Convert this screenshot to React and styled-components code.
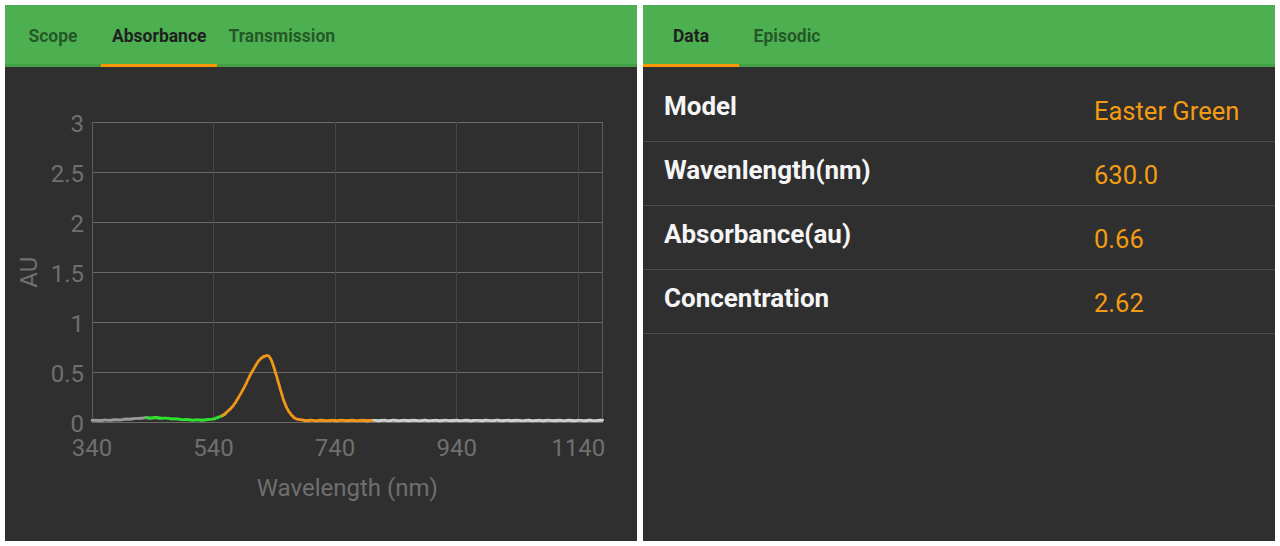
import styled, {createGlobalStyle} from "styled-components";

const GlobalStyle = createGlobalStyle`
  html, body {
    margin: 0;
    padding: 0;
    background: #ffffff;
  }
  body {
    font-family: Roboto, "Liberation Sans", sans-serif;
  }
`;

const Page = styled.div`
  display: flex;
  gap: 6px;
  padding: 5px;
  height: 546px;
  box-sizing: border-box;
`;

const Panel = styled.section`
  flex: 1;
  display: flex;
  flex-direction: column;
  background: #2f2f2f;
  min-width: 0;
`;

const TabBar = styled.nav`
  display: flex;
  height: 62px;
  background: #4caf50;
  box-shadow: inset 0 -3px 0 #43a047;
  flex-shrink: 0;
`;

const Tab = styled.div`
  min-width: 96px;
  padding: 0 11px 1px;
  box-sizing: border-box;
  display: flex;
  align-items: center;
  justify-content: center;
  font-size: 17.5px;
  font-weight: 700;
  color: ${p => (p.$active ? "#1f1f1f" : "rgba(0, 0, 0, 0.52)")};
  box-shadow: ${p => (p.$active ? "inset 0 -3px 0 #ff9800" : "none")};
  cursor: pointer;
`;

const ChartBody = styled.div`
  flex: 1;
`;

const ChartSvg = styled.svg`
  display: block;
  font-family: Roboto, "Liberation Sans", sans-serif;
`;

const DataList = styled.div`
  padding-top: 11px;
`;

const Row = styled.div`
  display: grid;
  grid-template-columns: 430px 1fr;
  align-items: start;
  height: 63px;
  padding-left: 21px;
  border-bottom: 1px solid #4a4a4a;
`;

const Label = styled.div`
  padding-top: 13px;
  font-size: 26px;
  line-height: 30px;
  font-weight: 700;
  color: #f5f5f5;
`;

const Value = styled.div`
  padding-top: 19px;
  font-size: 25.5px;
  line-height: 28px;
  color: #f39c12;
`;

// plot geometry, in svg units
const X0 = 87;
const X1 = 597.5;
const Y0 = 355.3;
const NM0 = 340;
const NM1 = 1180;
const sx = nm => X0 + ((nm - NM0) * (X1 - X0)) / (NM1 - NM0);
const sy = a => Y0 - a * 100;

const absorbance = nm => {
    const s = nm < 628 ? 32.5 : 18;
    let a = 0.65 * Math.exp(-((nm - 628) ** 2) / (2 * s * s));
    a += 0.027 * Math.exp(-((nm - 440) ** 2) / (2 * 35 * 35));
    a += 0.018 + 0.003 * Math.sin(nm * 1.7) + 0.002 * Math.sin(nm * 0.37);
    return a;
};

const trace = (from, to) => {
    const pts = [];
    for (let nm = from; nm <= to; nm += 2) {
        pts.push(`${sx(nm).toFixed(1)},${sy(absorbance(nm)).toFixed(1)}`);
    }
    return pts.join(" ");
};

const segments = [
    {from: 340, to: 450, color: "#9a9a9a"},
    {from: 790, to: 1180, color: "#cfcfcf"},
    {from: 430, to: 560, color: "#2fe02f"},
    {from: 554, to: 800, color: "#f0961a"},
];

const yTicks = [0, 0.5, 1, 1.5, 2, 2.5, 3];
const xTicks = [340, 540, 740, 940, 1140];

const AbsorbanceChart = () => (
    <ChartSvg width="632" height="475" viewBox="0 0 632 475">
        {yTicks.map(t => (
            <line key={t} x1={X0} x2={X1} y1={sy(t)} y2={sy(t)}
                  stroke="#6e6a63" strokeWidth="1" shapeRendering="crispEdges"/>
        ))}
        {xTicks.slice(1).map(t => (
            <line key={t} x1={sx(t)} x2={sx(t)} y1={sy(3)} y2={Y0}
                  stroke="#474747" strokeWidth="1" shapeRendering="crispEdges"/>
        ))}
        <line x1={X0} x2={X0} y1={sy(3)} y2={Y0} stroke="#5c5c5c" shapeRendering="crispEdges"/>
        <line x1={X1} x2={X1} y1={sy(3)} y2={Y0} stroke="#5c5c5c" shapeRendering="crispEdges"/>

        {segments.map(s => (
            <polyline key={s.from} points={trace(s.from, s.to)} fill="none"
                      stroke={s.color} strokeWidth="2.8" strokeLinejoin="round" strokeLinecap="round"/>
        ))}

        <g fill="#6f6f6f" fontSize="24">
            {yTicks.map(t => (
                <text key={t} x="79" y={sy(t) + 2} textAnchor="end" dominantBaseline="central">{t}</text>
            ))}
            {xTicks.map(t => (
                <text key={t} x={sx(t)} y="381" textAnchor="middle" dominantBaseline="central">{t}</text>
            ))}
            <text x={(X0 + X1) / 2} y="421" textAnchor="middle" dominantBaseline="central">Wavelength (nm)</text>
            <text x="24" y={(sy(3) + Y0) / 2} textAnchor="middle" dominantBaseline="central"
                  transform={`rotate(-90 24 ${(sy(3) + Y0) / 2})`}>AU</text>
        </g>
    </ChartSvg>
);

const readings = [
    {label: "Model", value: "Easter Green"},
    {label: "Wavenlength(nm)", value: "630.0"},
    {label: "Absorbance(au)", value: "0.66"},
    {label: "Concentration", value: "2.62"},
];

const App = () => (
    <>
        <GlobalStyle/>
        <Page>
            <Panel>
                <TabBar>
                    <Tab>Scope</Tab>
                    <Tab $active>Absorbance</Tab>
                    <Tab>Transmission</Tab>
                </TabBar>
                <ChartBody>
                    <AbsorbanceChart/>
                </ChartBody>
            </Panel>
            <Panel>
                <TabBar>
                    <Tab $active>Data</Tab>
                    <Tab>Episodic</Tab>
                </TabBar>
                <DataList>
                    {readings.map(r => (
                        <Row key={r.label}>
                            <Label>{r.label}</Label>
                            <Value>{r.value}</Value>
                        </Row>
                    ))}
                </DataList>
            </Panel>
        </Page>
    </>
);

export default App;
